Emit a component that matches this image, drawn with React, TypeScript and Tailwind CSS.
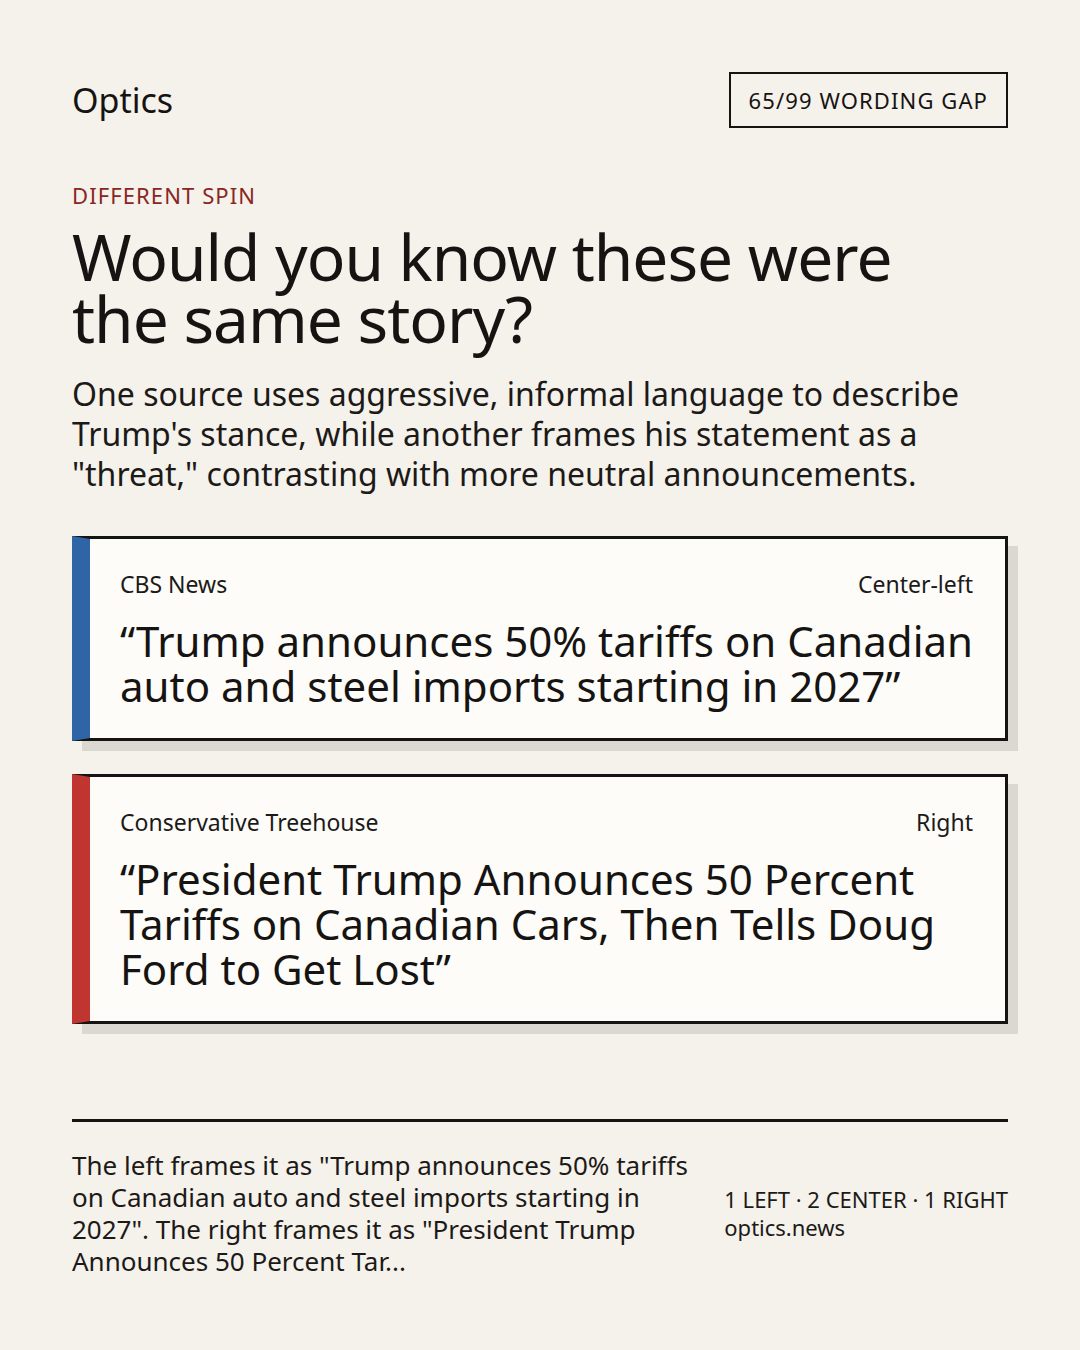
import React from "react";

const font = { fontFamily: '"Noto Sans", "Open Sans", sans-serif' };

function Card({
  source,
  lean,
  quote,
  barClass,
}: {
  source: string;
  lean: string;
  quote: string;
  barClass: string;
}) {
  return (
    <div className="relative">
      <div className="absolute left-[10px] top-[10px] right-[-10px] bottom-[-10px] bg-[#dbd8d1]" />
      <div
        className={`relative flex flex-col gap-[19px] border-[3px] border-l-[18px] border-[#161412] bg-[#fdfcf8] py-[30px] pl-[30px] pr-[32px] ${barClass}`}
      >
        <div className="flex items-center justify-between text-[23px] leading-[30px] text-[#1c1a18]">
          <span>{source}</span>
          <span>{lean}</span>
        </div>
        <div className="text-[42px] leading-[45px] text-[#161412]">{quote}</div>
      </div>
    </div>
  );
}

export default function App() {
  return (
    <div
      style={font}
      className="flex h-[1350px] w-[1080px] flex-col bg-[#f5f1eb] px-[72px] pt-[72px] pb-[73px] text-[#161412]"
    >
      <div className="flex items-center justify-between">
        <div className="text-[34px] leading-[46px]">Optics</div>
        <div className="flex h-[56px] items-center border-2 border-[#161412] px-[18px] text-[22px] tracking-[0.05em]">
          65/99 WORDING GAP
        </div>
      </div>

      <div className="mt-[52px] text-[22px] leading-[30px] tracking-[0.05em] text-[#8a2622]">
        DIFFERENT SPIN
      </div>
      <h1 className="mt-[16px] text-[64px] leading-[62px] font-normal tracking-[-1px]">
        Would you know these were
        <br />
        the same story?
      </h1>
      <p className="mt-[24px] text-[32px] leading-[40px] text-[#1c1a18]">
        One source uses aggressive, informal language to describe Trump's stance, while another
        frames his statement as a "threat," contrasting with more neutral announcements.
      </p>

      <div className="mt-[42px] flex flex-col gap-[33px]">
        <Card
          source="CBS News"
          lean="Center-left"
          quote="“Trump announces 50% tariffs on Canadian auto and steel imports starting in 2027”"
          barClass="border-l-[#2f65a7]"
        />
        <Card
          source="Conservative Treehouse"
          lean="Right"
          quote="“President Trump Announces 50 Percent Tariffs on Canadian Cars, Then Tells Doug Ford to Get Lost”"
          barClass="border-l-[#c0352f]"
        />
      </div>

      <div className="mt-auto border-t-[3px] border-[#161412] pt-[27px]">
        <div className="flex items-center justify-between">
          <p className="w-[650px] text-[26px] leading-[32px] text-[#1c1a18]">
            The left frames it as "Trump announces 50% tariffs on Canadian auto and steel imports
            starting in 2027". The right frames it as "President Trump Announces 50 Percent Tar...
          </p>
          <div className="text-[22px] leading-[28px] text-[#1c1a18]">
            <div>1 LEFT · 2 CENTER · 1 RIGHT</div>
            <div>optics.news</div>
          </div>
        </div>
      </div>
    </div>
  );
}
